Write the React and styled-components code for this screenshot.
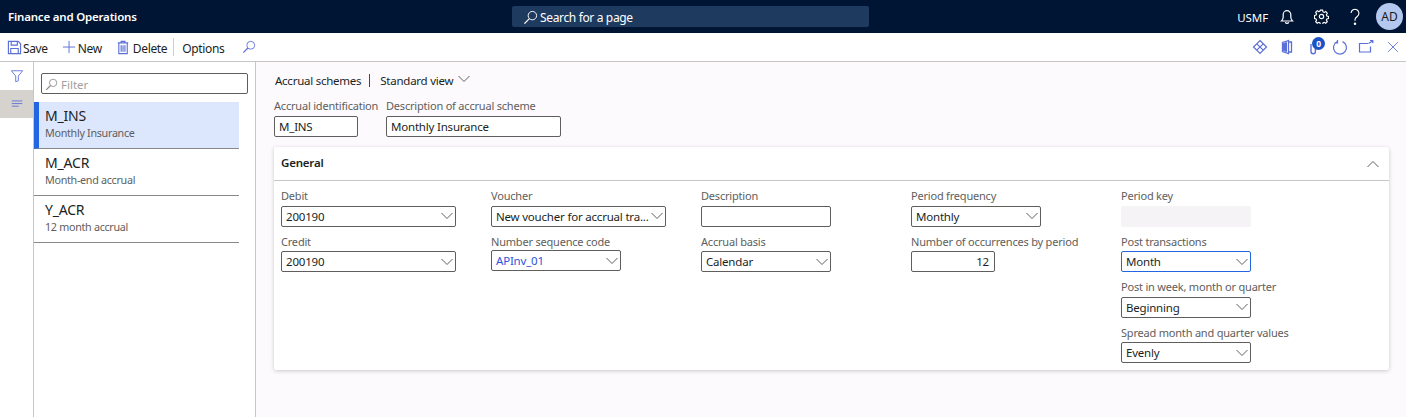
import React from "react";
import styled, { createGlobalStyle } from "styled-components";

const Global = createGlobalStyle`
  html, body { margin: 0; padding: 0; height: 100%; }
  body {
    font-family: "Noto Sans", "Open Sans", sans-serif;
    font-size: 12px;
    color: #201f1e;
    background: #fdfafd;
  }
  * { box-sizing: border-box; }
`;

const ACCENT = "#5b6fd6";

const Line = ({ size = 16, children, color = ACCENT, sw = 1 }) => (
  <svg width={size} height={size} viewBox="0 0 16 16" fill="none" stroke={color} strokeWidth={sw}>
    {children}
  </svg>
);

const SearchGlyph = ({ color = ACCENT, size = 14 }) => (
  <Line size={size} color={color}>
    <circle cx="10" cy="6" r="4.5" />
    <path d="M6.8 9.2 1.5 14.5" strokeWidth="1.4" />
  </Line>
);

const Chevron = ({ up }) => (
  <svg width="14" height="8" viewBox="0 0 14 8" fill="none" stroke="#605e5c" strokeWidth="1">
    <path d={up ? "M1.5 7 7 1.5 12.5 7" : "M1.5 1 7 6.5 12.5 1"} />
  </svg>
);

const TopBar = styled.header`
  height: 33px;
  background: #001433;
  color: #fff;
  display: grid;
  grid-template-columns: 512px 357px 1fr;
  align-items: center;
`;
const Brand = styled.div`
  padding-left: 8px;
  font-weight: 600;
  font-size: 11.5px;
  letter-spacing: -0.2px;
`;
const SearchBox = styled.div`
  height: 21px;
  background: #1f3a5f;
  border-radius: 2px;
  display: flex;
  align-items: center;
  gap: 2px;
  padding: 2px 0 0 11px;
  font-size: 12px;
  letter-spacing: -0.35px;
`;
const TopRight = styled.div`
  display: flex;
  align-items: center;
  justify-content: flex-end;
  padding-right: 3px;
`;
const Company = styled.span`
  font-size: 11.5px;
  margin-right: 2px;
  padding-top: 1px;
  letter-spacing: -0.1px;
`;
const TopIcon = styled.span`
  width: 34px;
  display: flex;
  justify-content: center;
`;
const Avatar = styled.span`
  width: 27px;
  height: 27px;
  margin-left: 4px;
  border-radius: 50%;
  background: #b4c7ee;
  color: #1b1a19;
  display: flex;
  align-items: center;
  justify-content: center;
  font-size: 12px;
`;

const ActionBar = styled.div`
  height: 29px;
  background: #fff;
  border-bottom: 1px solid #c8c6c4;
  display: flex;
  align-items: center;
  padding: 0 0 0 7px;
  font-size: 12px;
  letter-spacing: -0.35px;
`;
const Action = styled.span`
  display: flex;
  align-items: center;
  gap: ${(p) => p.$inner ?? 2}px;
  margin-right: ${(p) => p.$gap || 0}px;
`;
const ActionLabel = styled.span`
  margin-top: 2px;
`;
const Divider = styled.span`
  width: 1px;
  height: 18px;
  background: #d2d0ce;
  margin-right: 8px;
`;
const ActionIcons = styled.div`
  margin-left: auto;
  display: flex;
  align-items: center;
`;
const ActionIcon = styled.span`
  position: relative;
  width: ${(p) => p.$w || 27}px;
  height: 18px;
  display: flex;
  align-items: center;
  justify-content: center;
`;
const Badge = styled.span`
  position: absolute;
  top: -1px;
  right: 2px;
  width: 13px;
  height: 13px;
  border-radius: 50%;
  background: #1b52c4;
  color: #fff;
  font-size: 8.5px;
  font-weight: 700;
  display: flex;
  align-items: center;
  justify-content: center;
`;

const Body = styled.div`
  display: flex;
  height: 355px;
`;
const Rail = styled.nav`
  width: 34px;
  background: #fff;
  border-right: 1px solid #c8c6c4;
  display: flex;
  flex-direction: column;
`;
const RailItem = styled.div`
  height: 28px;
  display: flex;
  align-items: center;
  justify-content: center;
  background: ${(p) => (p.$active ? "#d6d3ce" : "transparent")};
`;
const ListPane = styled.aside`
  width: 222px;
  background: #fff;
  border-right: 1px solid #c8c6c4;
  padding-top: 11px;
`;
const FilterBox = styled.div`
  width: 207px;
  height: 21px;
  margin-left: 7px;
  margin-bottom: 8px;
  padding: 2px 0 0 3px;
  border: 1px solid #605e5c;
  border-radius: 2px;
  display: flex;
  align-items: center;
  gap: 3px;
  color: #a19f9d;
  font-size: 11.5px;
  line-height: 16px;
`;
const ListItem = styled.div`
  width: 205px;
  height: 47px;
  padding: 3px 0 0 ${(p) => (p.$selected ? 6 : 11)}px;
  background: ${(p) => (p.$selected ? "#dce6fd" : "#fff")};
  border-left: ${(p) => (p.$selected ? "5px solid #2266e3" : "0")};
  border-bottom: 1px solid #8a8886;
`;
const ItemTitle = styled.div`
  font-size: 14px;
  line-height: 21px;
  height: 20px;
  color: #201f1e;
  letter-spacing: -0.2px;
`;
const ItemSub = styled.div`
  font-size: 10.75px;
  line-height: 16px;
  color: #605e5c;
  letter-spacing: -0.3px;
`;

const Content = styled.main`
  flex: 1;
  padding: 10px 17px 0 18px;
`;
const Crumbs = styled.div`
  display: flex;
  align-items: center;
  height: 16px;
  padding-left: 1px;
  font-size: 11.5px;
  letter-spacing: -0.25px;
`;
const Pipe = styled.span`
  width: 1px;
  height: 13px;
  background: #742774;
  margin: 0 10px 0 8px;
`;
const ViewChevron = styled.span`
  margin-left: 4px;
  display: flex;
  margin-top: -2px;
`;
const HeadFields = styled.div`
  display: flex;
  margin-top: 10px;
  height: 39px;
`;
const HeadField = styled.div`
  width: ${(p) => p.$w}px;
`;
const Card = styled.section`
  margin-top: 10px;
  height: 223px;
  background: #fff;
  border-radius: 2px;
  box-shadow: 0 1px 4px rgba(0, 0, 0, 0.2);
`;
const CardHead = styled.div`
  height: 34px;
  border-bottom: 1px solid #c8c6c4;
  display: flex;
  align-items: center;
  justify-content: space-between;
  padding: 0 9px 0 7px;
`;
const CardTitle = styled.span`
  margin-bottom: 2px;
  font-weight: 600;
  font-size: 11.5px;
  letter-spacing: -0.2px;
`;
const Columns = styled.div`
  display: grid;
  grid-template-columns: repeat(5, 210px);
  padding: 7px 0 0 7px;
`;
const Field = styled.div`
  height: 45.5px;
`;
const Label = styled.div`
  font-size: 11px;
  line-height: 16px;
  height: ${(p) => (p.$tight ? 16.6 : 17.6)}px;
  color: #605e5c;
  letter-spacing: -0.2px;
  white-space: nowrap;
`;
const Box = styled.div`
  width: ${(p) => p.$w || 130}px;
  height: 21px;
  background: ${(p) => (p.$disabled ? "#f5f3f5" : "#fff")};
  border: 1px solid ${(p) => (p.$disabled ? "#f5f3f5" : p.$focus ? "#2266e3" : "#605e5c")};
  border-radius: 2px;
  display: flex;
  align-items: center;
  justify-content: ${(p) => (p.$right ? "flex-end" : "space-between")};
  padding: 0 ${(p) => (p.$right ? 5 : 1)}px 0 4px;
  font-size: 11.5px;
  letter-spacing: -0.2px;
  color: ${(p) => (p.$link ? "#2e56d8" : "#201f1e")};
  white-space: nowrap;
`;

const FormField = ({ label, value, w, select, tight, ...rest }) => (
  <Field>
    <Label $tight={tight}>{label}</Label>
    <Box $w={w} {...rest}>
      <span>{value}</span>
      {select && <Chevron />}
    </Box>
  </Field>
);

const formColumns = [
  [
    { label: "Debit", value: "200190", w: 175, select: true },
    { label: "Credit", value: "200190", w: 175, select: true },
  ],
  [
    { label: "Voucher", value: "New voucher for accrual tra...", w: 175, select: true },
    { label: "Number sequence code", value: "APInv_01", select: true, tight: true, $link: true },
  ],
  [
    { label: "Description", value: "" },
    { label: "Accrual basis", value: "Calendar", select: true },
  ],
  [
    { label: "Period frequency", value: "Monthly", select: true },
    { label: "Number of occurrences by period", value: "12", w: 84, $right: true },
  ],
  [
    { label: "Period key", value: "", $disabled: true },
    { label: "Post transactions", value: "Month", select: true, $focus: true },
    { label: "Post in week, month or quarter", value: "Beginning", select: true },
    { label: "Spread month and quarter values", value: "Evenly", select: true },
  ],
];

const items = [
  { id: "M_INS", sub: "Monthly Insurance", selected: true },
  { id: "M_ACR", sub: "Month-end accrual" },
  { id: "Y_ACR", sub: "12 month accrual" },
];

export default function App() {
  return (
    <>
      <Global />
      <TopBar>
        <Brand>Finance and Operations</Brand>
        <SearchBox>
          <SearchGlyph color="#fff" size={15} />
          Search for a page
        </SearchBox>
        <TopRight>
          <Company>USMF</Company>
          <TopIcon>
            <Line color="#fff" size={16} sw={1.2}>
              <path d="M2.500 12h11c-1.200-1.200-1.700-2-1.700-4V5.500a3.800 3.800 0 0 0-7.600 0V8c0 2-.5 2.800-1.700 4ZM6.300 13.200a1.800 1.800 0 0 0 3.400 0" />
            </Line>
          </TopIcon>
          <TopIcon>
            <Line color="#fff" size={15} sw={1.2}>
              <circle cx="8" cy="8" r="2.300" />
              <path d="M6.800 1.200h2.400l.4 1.900 1.300.6 1.700-1 1.600 1.800-1 1.600.5 1.300 1.800.5v2.200l-1.800.5-.5 1.300 1 1.700-1.700 1.600-1.600-1-1.300.6-.4 1.900H6.800l-.4-1.900-1.300-.6-1.700 1-1.600-1.700 1-1.600-.6-1.300-1.700-.5V7l1.700-.5.6-1.300-1-1.600 1.700-1.800 1.600 1 1.300-.6z" />
            </Line>
          </TopIcon>
          <TopIcon>
            <Line color="#fff" size={18}>
              <path d="M4.500 4.500a3.500 3.500 0 1 1 5.500 3c-1.300.9-2 1.500-2 3v.8" />
              <circle cx="8" cy="14" r=".6" fill="#fff" />
            </Line>
          </TopIcon>
          <Avatar>AD</Avatar>
        </TopRight>
      </TopBar>

      <ActionBar>
        <Action $gap={14} $inner={1}>
          <Line size={15} sw={1.2}>
            <path d="M1.500 1.500h10.500l2.500 2.500v10.500h-13zM4.500 1.500v4h6.500v-4M4 14.500v-5.500h8v5.500" />
          </Line>
          <ActionLabel>Save</ActionLabel>
        </Action>
        <Action $gap={14} $inner={1}>
          <Line size={15}>
            <path d="M7.500 1v13M1 7.500h13" />
          </Line>
          <ActionLabel>New</ActionLabel>
        </Action>
        <Action $gap={6}>
          <Line size={15} sw={1.2}>
            <path d="M2 3h11M5.500 3V1.500h4V3M3 3v11.500h9V3M5.500 5.500v7M7.500 5.500v7M9.500 5.500v7" />
          </Line>
          <ActionLabel>Delete</ActionLabel>
        </Action>
        <Divider />
        <Action $gap={18}>
          <ActionLabel>Options</ActionLabel>
        </Action>
        <SearchGlyph />
        <ActionIcons>
          <ActionIcon>
            <Line sw={1.2}>
              <path d="M8 1.500 14.500 8 8 14.500 1.500 8zM4.800 4.800l6.400 6.400M11.200 4.800l-6.400 6.400" />
            </Line>
          </ActionIcon>
          <ActionIcon>
            <Line>
              <path d="M9.500 1.500 3.500 3.500v9l6 2zM9.500 3h3v10h-3" strokeWidth="1.300" />
              <path d="M4.500 4.500v7l3 1v-9z" fill={ACCENT} />
            </Line>
          </ActionIcon>
          <ActionIcon>
            <Line>
              <path d="M5 5v7.500a2.200 2.200 0 0 0 4.400 0V3.500" strokeWidth="1.400" />
            </Line>
            <Badge>0</Badge>
          </ActionIcon>
          <ActionIcon $w={25}>
            <Line sw={1.2}>
              <path d="M5 2.800a6.500 6.500 0 1 0 5.500-.2M5.500 1v2.800H2.700" />
            </Line>
          </ActionIcon>
          <ActionIcon>
            <Line sw={1.2}>
              <path d="M10 4.500H1.500v8.500h11V7.500M10.500 4.500l4-2.500M12 1.500h2.800v2.800" />
            </Line>
          </ActionIcon>
          <ActionIcon>
            <Line size={14}>
              <path d="M2.500 2.500l11 11M13.500 2.500l-11 11" />
            </Line>
          </ActionIcon>
        </ActionIcons>
      </ActionBar>

      <Body>
        <Rail>
          <RailItem>
            <Line size={14}>
              <path d="M1.500 2h13L9.500 8v5.500l-3 1V8z" />
            </Line>
          </RailItem>
          <RailItem $active>
            <Line size={14}>
              <path d="M2 4.500h12M2 7.500h12M2 10.500h8" />
            </Line>
          </RailItem>
        </Rail>
        <ListPane>
          <FilterBox>
            <SearchGlyph color="#8a8886" size={13} />
            Filter
          </FilterBox>
          {items.map((item) => (
            <ListItem key={item.id} $selected={item.selected}>
              <ItemTitle>{item.id}</ItemTitle>
              <ItemSub>{item.sub}</ItemSub>
            </ListItem>
          ))}
        </ListPane>
        <Content>
          <Crumbs>
            Accrual schemes
            <Pipe />
            Standard view
            <ViewChevron>
              <Chevron />
            </ViewChevron>
          </Crumbs>
          <HeadFields>
            <HeadField $w={112}>
              <Label>Accrual identification</Label>
              <Box $w={84}>M_INS</Box>
            </HeadField>
            <HeadField $w={175}>
              <Label>Description of accrual scheme</Label>
              <Box $w={175}>Monthly Insurance</Box>
            </HeadField>
          </HeadFields>
          <Card>
            <CardHead>
              <CardTitle>General</CardTitle>
              <Chevron up />
            </CardHead>
            <Columns>
              {formColumns.map((fields, i) => (
                <div key={i}>
                  {fields.map((f) => (
                    <FormField key={f.label} {...f} />
                  ))}
                </div>
              ))}
            </Columns>
          </Card>
        </Content>
      </Body>
    </>
  );
}
